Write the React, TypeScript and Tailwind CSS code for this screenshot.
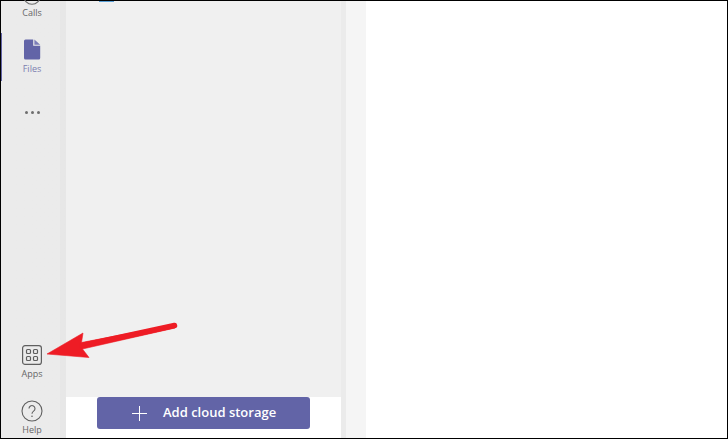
export default function App() {
  return (
    <div className="relative flex h-[439px] w-[728px] flex-col overflow-hidden bg-black pt-px pb-[1px] pl-px pr-px font-['Liberation_Sans',sans-serif]">
      <div className="flex min-h-0 flex-1 bg-white">
        {/* App rail */}
        <div className="relative flex h-full w-[65px] shrink-0 flex-col items-center bg-gradient-to-r from-[#ebebeb] from-[91%] to-[#e7e7e7] to-[91%] pr-[3px] font-['Open_Sans',sans-serif]">
          <div className="absolute left-0 top-[32px] h-[48px] w-[1px] bg-[#6264a7]" />
          <div className="relative h-[6px] w-full">
            <svg className="absolute left-[21px] top-[-9px]" width="20" height="14" viewBox="0 0 20 14" fill="none">
              <circle cx="10" cy="4" r="8.2" stroke="#6a6a6a" strokeWidth="1.1" />
            </svg>
          </div>
          <span className="text-[9px] leading-[12px] text-[#666666]">Calls</span>
          <svg className="mt-[20px]" width="17" height="21" viewBox="0 0 17 21">
            <path d="M1.5 0.5H9.2V6.8H16.2V19a1.5 1.5 0 0 1-1.5 1.5H1.5A1.5 1.5 0 0 1 0 19V2A1.5 1.5 0 0 1 1.5 0.5Z" fill="#6264a7" />
            <path d="M10.4 0.6L16.2 5.8H10.4Z" fill="#7b7db8" />
          </svg>
          <span className="mt-[3px] text-[9px] leading-[12px] text-[#7b7db0]">Files</span>
          <div className="mt-[36px] flex gap-[3px]">
            <span className="h-[3px] w-[3px] rounded-full bg-[#6e6e6e]" />
            <span className="h-[3px] w-[3px] rounded-full bg-[#6e6e6e]" />
            <span className="h-[3px] w-[3px] rounded-full bg-[#6e6e6e]" />
          </div>
          <div className="flex-1" />
          <svg width="20" height="20" viewBox="0 0 20 20" fill="none" stroke="#5f5f5f">
            <rect x="0.6" y="0.6" width="18.8" height="18.8" rx="2.5" strokeWidth="1.2" />
            <rect x="4.5" y="4.5" width="4" height="4" rx="1" strokeWidth="1.2" />
            <rect x="11.5" y="4.5" width="4" height="4" rx="1" strokeWidth="1.2" />
            <rect x="4.5" y="11.5" width="4" height="4" rx="1" strokeWidth="1.2" />
            <rect x="11.5" y="11.5" width="4" height="4" rx="1" strokeWidth="1.2" />
          </svg>
          <span className="mt-[3px] text-[9px] leading-[12px] text-[#666666]">Apps</span>
          <svg className="mt-[20px]" width="22" height="22" viewBox="0 0 22 22" fill="none" stroke="#5f5f5f">
            <circle cx="11" cy="11" r="10" strokeWidth="1.1" />
            <path d="M8 8.6a3 3 0 1 1 4.6 2.5c-1 .7-1.6 1.2-1.6 2.6" strokeWidth="1.1" />
            <circle cx="11" cy="16.2" r="0.8" fill="#5f5f5f" stroke="none" />
          </svg>
          <span className="mt-[2px] mb-[2px] text-[9px] leading-[12px] text-[#666666]">Help</span>
        </div>

        {/* List panel */}
        <div className="flex h-full w-[275px] shrink-0 flex-col bg-[#f0f0f0]">
          <div className="relative flex-1">
            <div className="absolute left-[33px] top-0 h-[1px] w-[15px] bg-[#5aa0d6]" />
          </div>
          <div className="flex h-[41px] shrink-0 justify-start bg-white pl-[31px]">
            <button className="flex h-[32px] w-[213px] items-center rounded-[3px] bg-[#6264a7] pl-[35px] text-white">
              <svg width="15" height="15" viewBox="0 0 15 15" stroke="white" strokeWidth="1">
                <path d="M7.5 0V15M0 7.5H15" />
              </svg>
              <span className="ml-[16px] font-['Open_Sans',sans-serif] text-[13px] font-semibold">Add cloud storage</span>
            </button>
          </div>
        </div>

        {/* Divider and content */}
        <div className="h-full w-[5px] shrink-0 bg-[#ebebeb]" />
        <div className="h-full w-[20px] shrink-0 bg-[#f5f5f5]" />
        <div className="h-full min-w-0 flex-1 bg-white" />
      </div>

      {/* Annotation arrow */}
      <svg className="absolute left-0 top-0" width="728" height="439" viewBox="0 0 728 439">
        <path d="M47 354L83 333L81.500 342.500L175 324.500L175 328L82.500 349L89 357.500Z" fill="#ee1c25" stroke="#ee1c25" strokeWidth="0.6" strokeLinejoin="round" />
        <path d="M82 345.500L174.500 325.500" stroke="#ee1c25" strokeWidth="5.500" strokeLinecap="round" />
      </svg>
    </div>
  );
}
